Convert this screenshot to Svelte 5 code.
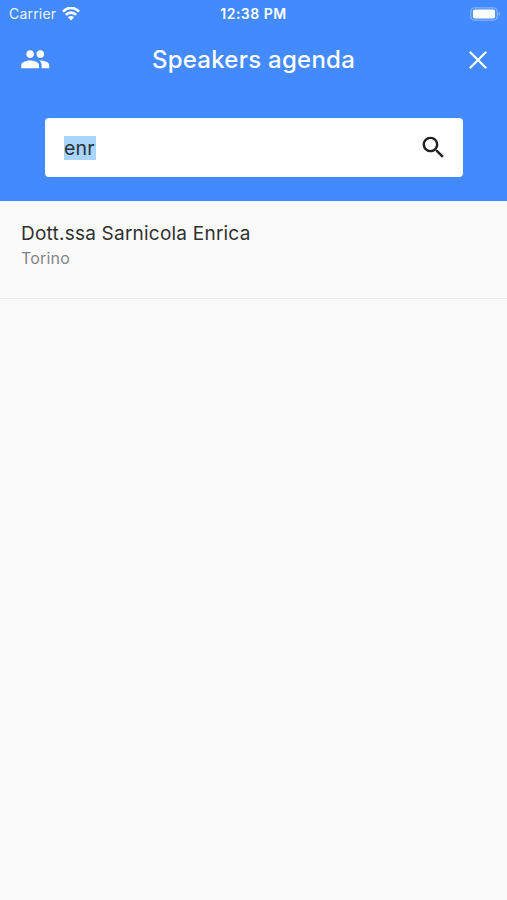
<script>
  const title = 'Speakers agenda';
  const query = 'enr';
  const speakers = [{ name: 'Dott.ssa Sarnicola Enrica', city: 'Torino' }];
</script>

<main class="screen">
  <header>
    <div class="status">
      <div class="network">
        <span class="carrier">Carrier</span>
        <svg class="wifi" width="18" height="14" viewBox="0 0 18 14" fill="none" stroke="#fff" stroke-width="2.6">
          <path d="M.9 4.700C5.6-.4 12.4-.4 17.1 4.700" />
          <path d="M3.9 7.900C6.8 4.800 11.2 4.800 14.1 7.900" />
          <path d="M9 13.400 5.900 10.300C7.500 8.700 10.500 8.700 12.100 10.300Z" fill="#fff" stroke="none" />
        </svg>
      </div>
      <span class="time">12:38 PM</span>
      <svg class="battery" width="31" height="14" viewBox="0 0 31 14">
        <rect x=".8" y=".8" width="26.4" height="12.4" rx="3.7" fill="none" stroke="#fff" stroke-opacity=".35" stroke-width="1.3" />
        <rect x="2.9" y="2.500" width="22.2" height="9" rx="2" fill="#fff" />
        <path d="M28.6 5q3 2 0 4z" fill="#fff" fill-opacity=".4" />
      </svg>
    </div>

    <div class="toolbar">
      <svg class="people" width="30.5" height="30.5" viewBox="0 0 24 24" fill="#fff">
        <path d="M16 11c1.66 0 2.99-1.34 2.99-3S17.66 5 16 5c-1.66 0-3 1.34-3 3s1.34 3 3 3zm-8 0c1.66 0 2.99-1.34 2.99-3S9.66 5 8 5C6.34 5 5 6.34 5 8s1.34 3 3 3zm0 2c-2.33 0-7 1.17-7 3.5V19h14v-2.500c0-2.330-4.670-3.500-7-3.500zm8 0c-.29 0-.62.02-.97.05 1.160.84 1.970 1.970 1.970 3.450V19h6v-2.500c0-2.330-4.670-3.500-7-3.500z" />
      </svg>
      <h1>{title}</h1>
      <svg class="close" width="18" height="18" viewBox="0 0 18 18" fill="none" stroke="#fff" stroke-width="2.3" stroke-linecap="round">
        <path d="m1.500 1.500 15 15m0-15-15 15" />
      </svg>
    </div>

    <div class="search">
      <span class="query">{query}</span>
      <svg width="29" height="29" viewBox="0 0 24 24" fill="#212121">
        <path d="M15.500 14h-.79l-.28-.27C15.410 12.590 16 11.110 16 9.500 16 5.910 13.090 3 9.500 3S3 5.910 3 9.500 5.910 16 9.500 16c1.610 0 3.090-.59 4.230-1.570l.27.28v.79l5 4.990L20.490 19l-4.990-5zm-6 0C7.010 14 5 11.990 5 9.500S7.010 5 9.500 5 14 7.010 14 9.500 11.990 14 9.500 14z" />
      </svg>
    </div>
  </header>

  <ul>
    {#each speakers as speaker}
      <li>
        <span class="name">{speaker.name}</span>
        <span class="city">{speaker.city}</span>
      </li>
    {/each}
  </ul>
</main>

<style>
  .screen {
    min-height: 900px;
    background: #fafafa;
    font-family: Inter, Roboto, sans-serif;
  }
  svg { display: block; flex: none; }
  header {
    box-sizing: border-box;
    height: 201px;
    background: #448aff;
    color: #fff;
  }
  .status {
    display: grid;
    grid-template-columns: 1fr auto 1fr;
    align-items: center;
    height: 27px;
    padding: 0 6px 0 9px;
  }
  .network { display: flex; align-items: center; gap: 6px; }
  .carrier { font-size: 14px; letter-spacing: .2px; opacity: .9; }
  .time { font-size: 14px; font-weight: 600; letter-spacing: .5px; margin: 0 1px 0 -2px; }
  .battery { justify-self: end; }
  .toolbar {
    display: grid;
    grid-template-columns: 1fr auto 1fr;
    align-items: center;
    height: 65px;
    padding: 0 20px;
  }
  h1 {
    margin: 0;
    padding-top: 1px;
    font-size: 24px;
    font-weight: 500;
    letter-spacing: .25px;
    line-height: 30px;
  }
  .close { justify-self: end; }
  .search {
    display: flex;
    align-items: center;
    justify-content: space-between;
    box-sizing: border-box;
    height: 59px;
    margin: 26px 44px 0 45px;
    padding: 0 15px 0 19px;
    border-radius: 4px;
    background: #fff;
  }
  .query {
    height: 24px;
    padding-right: 1px;
    background: #a9d5fa;
    color: #263238;
    font-size: 19.500px;
    letter-spacing: .2px;
    line-height: 24px;
  }
  ul { margin: 0; padding: 0; list-style: none; }
  li {
    display: flex;
    flex-direction: column;
    box-sizing: border-box;
    height: 98px;
    padding: 20px 21px 0;
    border-bottom: 1px solid #ececec;
  }
  .name { font-size: 19px; line-height: 25px; letter-spacing: .22px; color: #303030; }
  .city { font-size: 16px; line-height: 25px; letter-spacing: .2px; color: #858585; }
</style>
